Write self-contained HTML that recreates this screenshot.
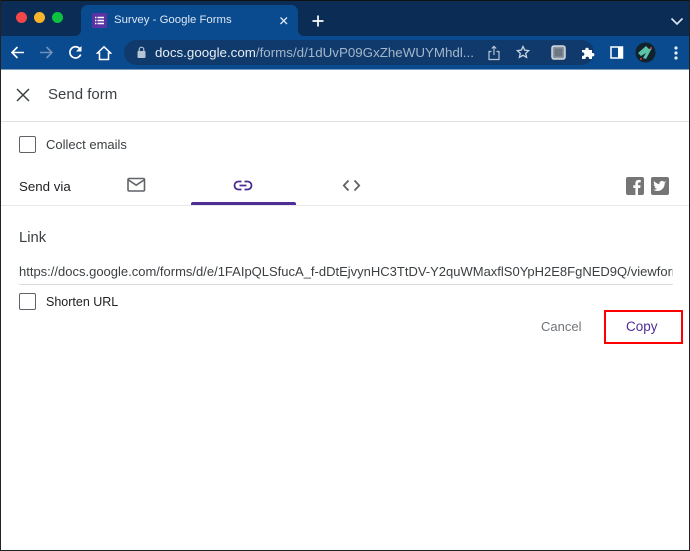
<!DOCTYPE html>
<html><head><meta charset="utf-8"><style>
html,body{margin:0;padding:0;background:#fff}
body{width:690px;height:551px;position:relative;overflow:hidden;font-family:"Liberation Sans",sans-serif}
.a{position:absolute;white-space:nowrap}
.t{color:#3c4043;font-size:13px;line-height:16px}
.cb{position:absolute;width:15px;height:15px;border:1.5px solid #5f6368;border-radius:2px;box-sizing:content-box}
</style></head><body>
<div class="a" style="left:0;top:0;width:690px;height:36px;background:#0b2d55"></div>
<div class="a" style="left:81px;top:5px;width:217px;height:31px;background:#0a4b8f;border-radius:7px 7px 0 0"></div>
<svg class="a" style="left:75px;top:30px" width="6" height="6"><path d="M6 0v6H0a6 6 0 0 0 6-6z" fill="#0a4b8f"/></svg>
<svg class="a" style="left:298px;top:30px" width="6" height="6"><path d="M0 0v6h6a6 6 0 0 1-6-6z" fill="#0a4b8f"/></svg>
<div class="a" style="left:0;top:36px;width:690px;height:33px;background:#0a4b8f"></div>
<div class="a" style="left:0;top:69px;width:690px;height:1px;background:#7d9cc0"></div>
<div class="a" style="left:16px;top:12px;width:11px;height:11px;border-radius:50%;background:#f4474a"></div>
<div class="a" style="left:34px;top:12px;width:11px;height:11px;border-radius:50%;background:#f9b42c"></div>
<div class="a" style="left:52px;top:12px;width:11px;height:11px;border-radius:50%;background:#0cc13f"></div>
<svg class="a" style="left:92px;top:13px" width="15" height="15"><rect width="15" height="15" rx="1.5" fill="#5b33a5"/><path d="M3 4.500h1.400M5.500 4.500h6.500M3 7.500h1.400M5.500 7.500h6.500M3 10.500h1.400M5.500 10.500h6.500" stroke="#fff" stroke-width="1.400"/></svg>
<div class="a" style="left:114px;top:13px;font-size:11.400px;line-height:15px;color:#dbe6f2">Survey - Google Forms</div>
<svg class="a" style="left:279px;top:16px" width="10" height="10"><path d="M1.500 1.500l6.500 6.500M8 1.500L1.500 8" stroke="#dfe8f2" stroke-width="1.300"/></svg>
<svg class="a" style="left:312px;top:15px" width="12" height="12"><path d="M6 .5v11M.5 6h11" stroke="#fff" stroke-width="1.700"/></svg>
<svg class="a" style="left:670px;top:17px" width="14" height="9"><path d="M1.500 1.500L7 7l5.500-5.500" fill="none" stroke="#dfe8f2" stroke-width="1.600"/></svg>
<svg class="a" style="left:10px;top:45px" width="15" height="15"><path d="M14 7.500H2M7.500 2L2 7.500 7.500 13" fill="none" stroke="#fff" stroke-width="1.600"/></svg>
<svg class="a" style="left:39px;top:45px" width="15" height="15"><path d="M1 7.500h12M7.500 2L13 7.500 7.500 13" fill="none" stroke="#6f8fb8" stroke-width="1.600"/></svg>
<svg class="a" style="left:68px;top:45px" width="15" height="15"><path d="M12.700 9.500A5.600 5.600 0 1 1 11.500 3.400" fill="none" stroke="#fff" stroke-width="1.700"/><path d="M13.500 1v5.500H8z" fill="#fff"/></svg>
<svg class="a" style="left:96px;top:45px" width="16" height="16"><path d="M1.500 8L8 1.800 14.500 8H12.500v6.500h-9V8z" fill="none" stroke="#fff" stroke-width="1.500"/></svg>
<div class="a" style="left:124px;top:40px;width:470px;height:25px;border-radius:13px;background:#103a6b"></div>
<svg class="a" style="left:136px;top:46px" width="12" height="13"><rect x="1.500" y="5" width="8" height="7" rx="1" fill="#b6c4d6"/><path d="M3.200 5V3.500a2.300 2.300 0 0 1 4.600 0V5" fill="none" stroke="#b6c4d6" stroke-width="1.200"/></svg>
<div class="a" style="left:155px;top:45px;font-size:13.350px;line-height:16px;color:#e6edf5;width:322px;overflow:hidden">docs.google.com<span style="color:#a3b6cc">/forms/d/1dUvP09GxZheWUYMhdl...</span></div>
<svg class="a" style="left:487px;top:45px" width="14" height="16"><path d="M4.500 6.500H2v8h10v-8H9.500M7 10V1.500M4.800 3.500L7 1.300l2.200 2.200" fill="none" stroke="#b6c4d6" stroke-width="1.200"/></svg>
<svg class="a" style="left:516px;top:45px" width="14" height="14"><path d="M7 1.500l1.700 3.700 4 .4-3 2.700.9 4L7 10.300l-3.600 2 .9-4-3-2.700 4-.4z" fill="none" stroke="#c8d4e2" stroke-width="1.300"/></svg>
<svg class="a" style="left:551px;top:45px" width="16" height="16"><rect x="1" y="1" width="13" height="13" rx="2" fill="#8d97a3" stroke="#d6dbe0" stroke-width="1.500"/><rect x="3.500" y="3.500" width="8" height="8" fill="#6d7782"/></svg>
<svg class="a" style="left:581px;top:45px" width="15" height="15"><path d="M1 5h3.300a1.800 1.800 0 1 1 3.400 0H11v3a1.800 1.800 0 1 1 0 3.400V14H8a1.800 1.800 0 1 0-3.400 0H1v-3.200a1.800 1.800 0 1 0 0-3.400z" fill="#fff"/></svg>
<svg class="a" style="left:610px;top:46px" width="14" height="13"><rect x="1" y="1" width="11.500" height="11" fill="#0a4b8f" stroke="#fff" stroke-width="1.500"/><rect x="8" y="1" width="5" height="11" fill="#fff"/></svg>
<svg class="a" style="left:635px;top:42px" width="21" height="21"><circle cx="10.500" cy="10.500" r="10" fill="#10222b"/><path d="M3 11l8-7 3 3 3-1-6 11-3-1 3-5-5 3z" fill="#5cc1a6"/><circle cx="16" cy="6" r="1" fill="#d33"/><circle cx="6" cy="17" r="1" fill="#d33"/></svg>
<svg class="a" style="left:673px;top:45px" width="6" height="16"><circle cx="3" cy="3" r="1.600" fill="#e8eef5"/><circle cx="3" cy="8" r="1.600" fill="#e8eef5"/><circle cx="3" cy="13" r="1.600" fill="#e8eef5"/></svg>

<svg class="a" style="left:15px;top:87px" width="16" height="16"><path d="M2 2l12 12M14 2L2 14" stroke="#3c4043" stroke-width="1.500"/></svg>
<div class="a" style="left:48px;top:86px;font-size:15px;line-height:18px;color:#3c4043">Send form</div>
<div class="a" style="left:1px;top:121px;width:688px;height:1px;background:#e0e0e0"></div>
<div class="cb" style="left:19px;top:136px"></div>
<div class="a t" style="left:46px;top:137px;font-size:13px">Collect emails</div>
<div class="a t" style="left:19px;top:179px;font-size:13.300px;color:#202124">Send via</div>
<svg class="a" style="left:127px;top:177px" width="19" height="16"><rect x="1" y="1.500" width="16.500" height="12.500" rx="1.200" fill="none" stroke="#5f6368" stroke-width="1.600"/><path d="M1.500 3l7.700 5.200L17 3" fill="none" stroke="#5f6368" stroke-width="1.600"/></svg>
<svg class="a" style="left:233px;top:180px" width="20" height="11"><path d="M8.500 1.500H5.500a4 4 0 0 0 0 8h3M11.500 1.500h3a4 4 0 0 1 0 8h-3M6.500 5.500h7" fill="none" stroke="#4a2a94" stroke-width="1.800"/></svg>
<div class="a" style="left:191px;top:202px;width:105px;height:3px;background:#4f2d96;border-radius:2px 2px 0 0"></div>
<svg class="a" style="left:342px;top:179px" width="19" height="13"><path d="M6.500 1.500L1.800 6.500l4.700 5M12.500 1.500l4.700 5-4.700 5" fill="none" stroke="#5f6368" stroke-width="1.800"/></svg>
<svg class="a" style="left:626px;top:177px" width="18" height="18"><rect width="18" height="18" rx="2" fill="#757575"/><path d="M12 18v-7h2.200l.4-2.700H12V6.700c0-.8.300-1.300 1.400-1.300h1.300V3a15 15 0 0 0-2-.1c-2 0-3.300 1.200-3.300 3.400v2H7.300V11h2.100v7z" fill="#fff"/></svg>
<svg class="a" style="left:651px;top:177px" width="18" height="18"><rect width="18" height="18" rx="2" fill="#757575"/><path d="M15 5.200c-.5.200-1 .4-1.500.4.500-.3 1-.8 1.200-1.400-.5.300-1 .5-1.700.7a2.600 2.600 0 0 0-4.500 2.400C6.300 6.700 4.400 5.700 3.100 4.100c-.7 1.200-.3 2.700.8 3.500-.4 0-.8-.1-1.200-.3 0 1.300.9 2.400 2.100 2.600-.4.100-.8.100-1.200 0 .3 1.100 1.300 1.800 2.400 1.800-1 .8-2.400 1.200-3.800 1 4.700 3 11.500.5 11.600-7 .5-.3.900-.8 1.200-1.500z" fill="#fff"/></svg>
<div class="a" style="left:1px;top:205px;width:688px;height:1px;background:#e8e8e8"></div>

<div class="a" style="left:19px;top:230px;font-size:14.800px;line-height:17px;color:#3c4043">Link</div>
<div class="a t" style="left:19px;top:264px;width:654px;overflow:hidden;font-size:13px;color:#3c4043">https://docs.google.com/forms/d/e/1FAIpQLSfucA_f-dDtEjvynHC3TtDV-Y2quWMaxflS0YpH2E8FgNED9Q/viewform</div>
<div class="a" style="left:19px;top:284px;width:654px;height:1px;background:#dadce0"></div>
<div class="cb" style="left:19px;top:293px"></div>
<div class="a t" style="left:46px;top:294px;font-size:12.500px;color:#202124">Shorten URL</div>
<div class="a" style="left:541px;top:319px;font-size:13px;line-height:15px;color:#70757a">Cancel</div>
<div class="a" style="left:604px;top:310px;width:79px;height:34px;box-sizing:border-box;border:2.500px solid #f00"></div>
<div class="a" style="left:626px;top:319px;font-size:13.500px;line-height:15px;color:#4f2d96">Copy</div>

<div class="a" style="left:0;top:0;width:690px;height:1px;background:#111"></div>
<div class="a" style="left:0;top:0;width:1px;height:551px;background:#222"></div>
<div class="a" style="left:689px;top:0;width:1px;height:551px;background:#222"></div>
<div class="a" style="left:0;top:550px;width:690px;height:1px;background:#222"></div>
</body></html>
